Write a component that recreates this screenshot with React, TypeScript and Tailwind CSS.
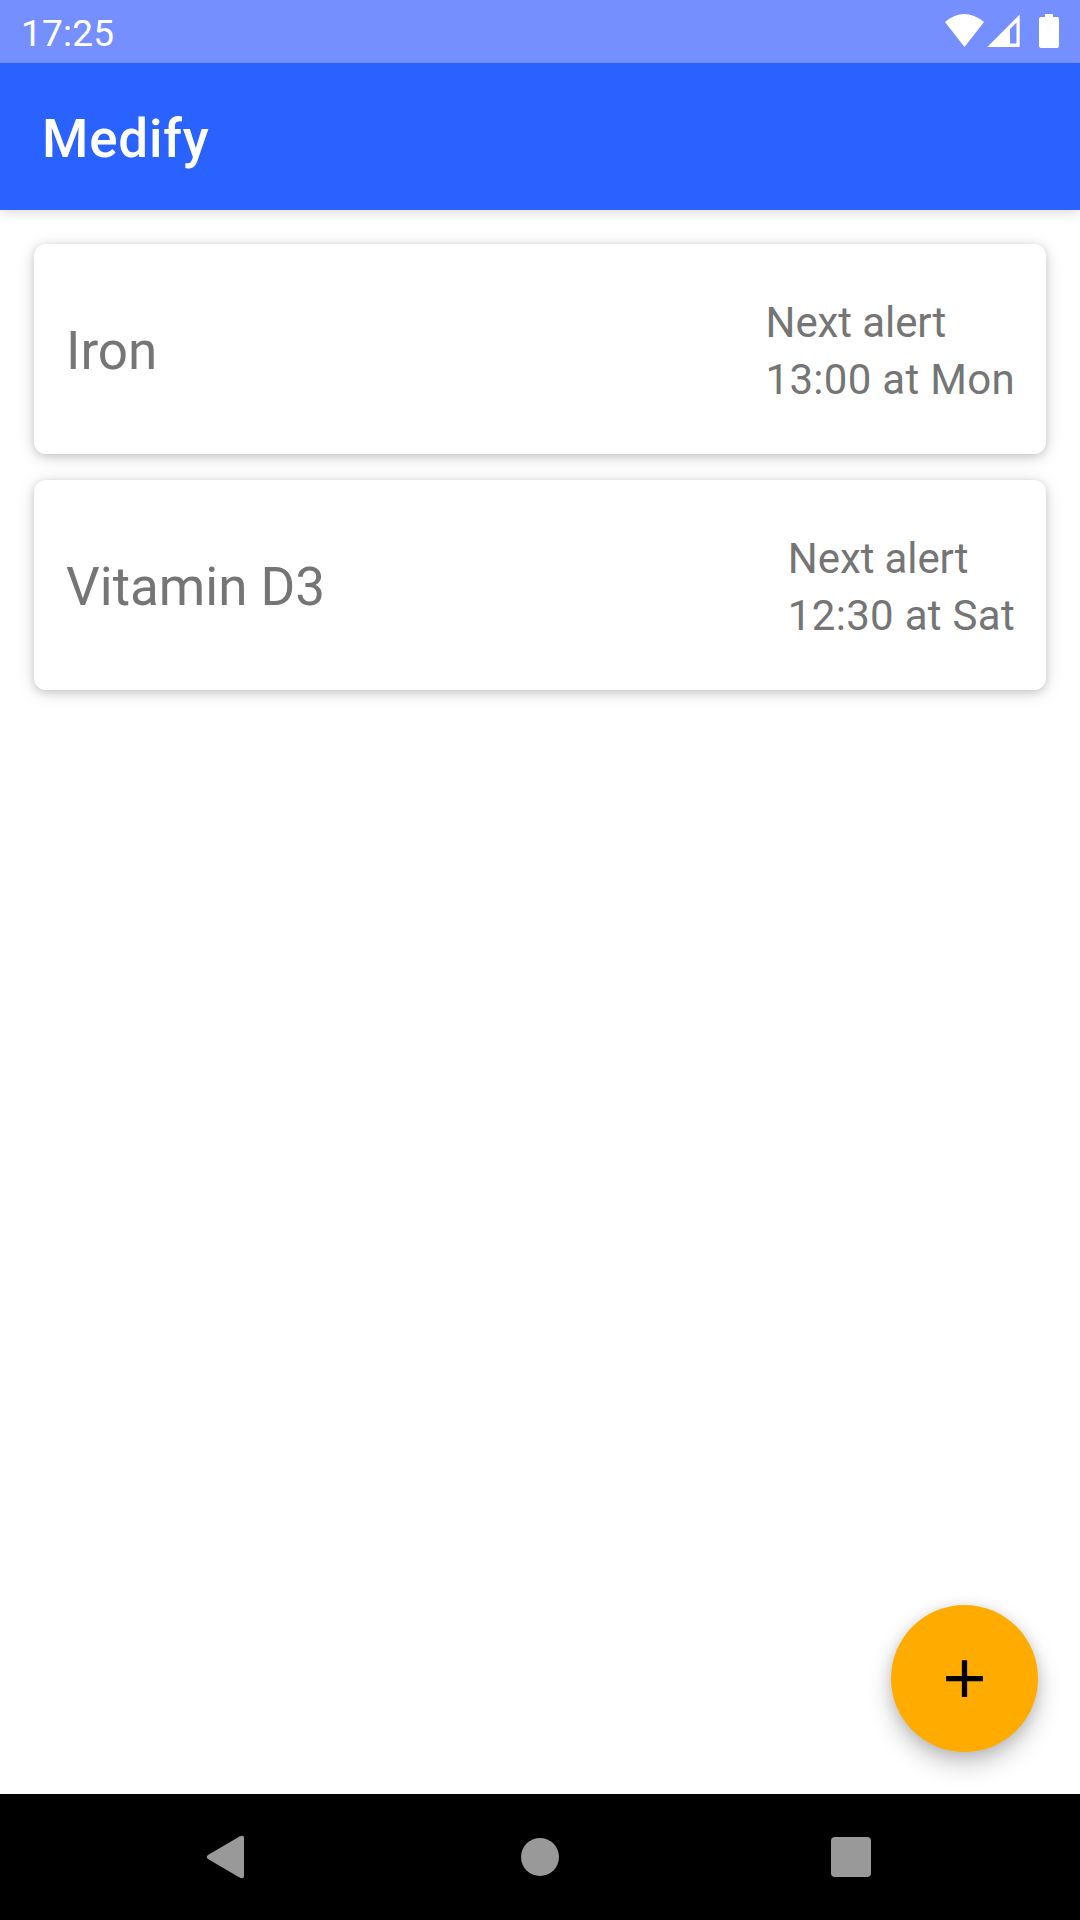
export default function App() {
  const items = [
    { name: 'Iron', time: '13:00 at Mon' },
    { name: 'Vitamin D3', time: '12:30 at Sat' },
  ];
  return (
    <div className="relative flex h-[1920px] w-[1080px] flex-col overflow-hidden bg-white font-[Roboto,sans-serif]">
      <div className="relative z-20 flex h-[63px] shrink-0 items-center justify-between bg-[#768fff] pl-[21px] pr-5 text-white">
        <span className="pt-1 text-[37px] leading-none tracking-[0.2px]">17:25</span>
        <svg className="h-[63px] w-[120px]" viewBox="940 0 120 63" fill="#fff">
          <path d="M945 22Q964 6 984 22L964.500 47Z" />
          <path fillRule="evenodd" d="M1019.700 14.500V47H987.300ZM1016.500 22.500V43.500H1010V29Z" />
          <path d="M1045 14h8v3h4q2 0 2 2v27q0 2-2 2h-16q-2 0-2-2v-27q0-2 2-2h4z" />
        </svg>
      </div>
      <header className="z-10 flex h-[147px] shrink-0 items-center bg-[#2962ff] pl-[42px] pt-[6px] shadow-[0_2px_12px_rgba(0,0,0,0.16)]">
        <h1 className="text-[53px] font-medium leading-none tracking-[0.8px] text-white">Medify</h1>
      </header>
      <main className="flex flex-1 flex-col gap-[26px] px-[34px] pt-[34px]">
        {items.map((item) => (
          <section key={item.name} className="flex h-[210px] items-center justify-between rounded-[12px] bg-white pl-[32px] pr-[31px] pt-[4px] text-[#757575] shadow-[0_2px_8px_rgba(0,0,0,0.14),0_3px_18px_rgba(0,0,0,0.14)]">
            <h2 className="pt-px text-[53px] leading-none">{item.name}</h2>
            <p className="text-[42px] leading-[57px]">
              <span className="block tracking-[-0.1px]">Next alert</span>
              <span className="block tracking-[0.3px]">{item.time}</span>
            </p>
          </section>
        ))}
      </main>
      <button aria-label="Add" className="absolute left-[891px] top-[1605px] flex size-[147px] items-center justify-center rounded-full bg-[#ffab00] shadow-[0_12px_24px_rgba(0,0,0,0.22),0_2px_14px_rgba(0,0,0,0.12)]">
        <svg className="size-[63px]" viewBox="0 0 24 24"><path d="M19 13h-6v6h-2v-6H5v-2h6V5h2v6h6z" /></svg>
      </button>
      <nav className="z-10 h-[126px] shrink-0 bg-black">
        <svg className="h-[126px] w-[1080px]" viewBox="0 1794 1080 126" fill="#999">
          <path d="M208 1855L239.500 1836.500Q244 1834.500 244 1838V1876Q244 1879.500 239.500 1877.500L208 1859Q205.500 1857 208 1855Z" />
          <circle cx="540" cy="1857" r="19" />
          <rect x="831" y="1837" width="40" height="40" rx="4" />
        </svg>
      </nav>
    </div>
  );
}
